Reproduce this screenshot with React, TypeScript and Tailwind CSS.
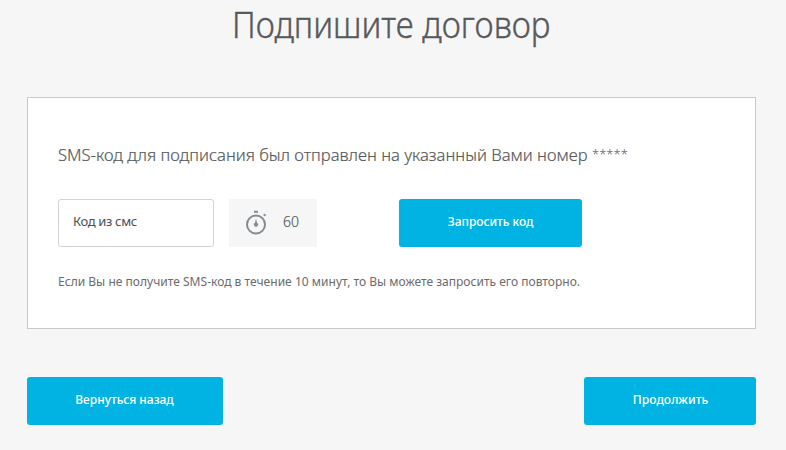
function Stopwatch() {
  return (
    <svg width="24" height="26" viewBox="0 0 24 26" fill="none" className="shrink-0">
      <path d="M9 1.8h4" stroke="#858c90" strokeWidth="2" />
      <circle cx="11" cy="14.5" r="9" stroke="#858c90" strokeWidth="2" />
      <path d="M11 8.5l1 4.2a2.1 2.1 0 1 1-2 0z" fill="#858c90" />
      <path d="M18.2 5h3M19.7 3.8v2.4" stroke="#858c90" strokeWidth="1" />
    </svg>
  );
}

const button =
  "flex h-12 items-center justify-center rounded-[3px] bg-[#00b3e3] pb-[3px] text-[13px] font-medium whitespace-nowrap text-white";

export default function App() {
  return (
    <main className="h-[450px] w-[786px] overflow-hidden bg-[#f6f6f6] pr-[30px] pl-[27px] font-['Noto_Sans','Open_Sans',sans-serif] text-[#58595b]">
      <h1 className="h-[97px] pl-[205px] text-[36px] leading-[50px] font-light whitespace-nowrap [-webkit-text-stroke:0.4px_#58595b]">
        <span className="inline-block origin-left scale-x-[0.92]">Подпишите договор</span>
      </h1>
      <section className="h-[232px] border border-[#c9c9c9] bg-white pt-[43px] pl-[30px]">
        <p className="flex h-[58px] text-[17px] leading-[28px] font-light whitespace-nowrap">
          <span className="w-[534px] [-webkit-text-stroke:0.2px_#58595b]">
            <span className="inline-block origin-left scale-x-[0.977]">SMS-код для подписания был отправлен на указанный Вами номер</span>
          </span>
          <span className="text-[13px] leading-[26px]">*****</span>
        </p>
        <div className="flex h-12">
          <input
            aria-label="Код из смс"
            placeholder="Код из смс"
            className="h-12 w-[156px] rounded-[3px] border border-[#d2d3d4] bg-white px-[14px] pb-[5px] text-[13px] tracking-[-0.35px] outline-none placeholder:text-[#4d4d4f]"
          />
          <div className="ml-[15px] flex w-[88px] items-center bg-[#f6f6f7] pl-4">
            <Stopwatch />
            <span className="ml-[14px] pb-[3px] text-[14px] font-light [-webkit-text-stroke:0.2px_#58595b]">60</span>
          </div>
          <button className={`${button} ml-[82px] w-[183px]`}>
            <span className="scale-x-[0.92]">Запросить код</span>
          </button>
        </div>
        <p className="mt-[24px] text-[13px] leading-[20px] font-normal whitespace-nowrap text-[#6a6b6d]">
          <span className="inline-block origin-left scale-x-[0.926]">Если Вы не получите SMS-код в течение 10 минут, то Вы можете запросить его повторно.</span>
        </p>
      </section>
      <div className="mt-12 flex justify-between">
        <button className={`${button} w-[196px]`}>
          <span className="scale-x-[0.92]">Вернуться назад</span>
        </button>
        <button className={`${button} w-[172px]`}>
          <span className="scale-x-[0.93]">Продолжить</span>
        </button>
      </div>
    </main>
  );
}
